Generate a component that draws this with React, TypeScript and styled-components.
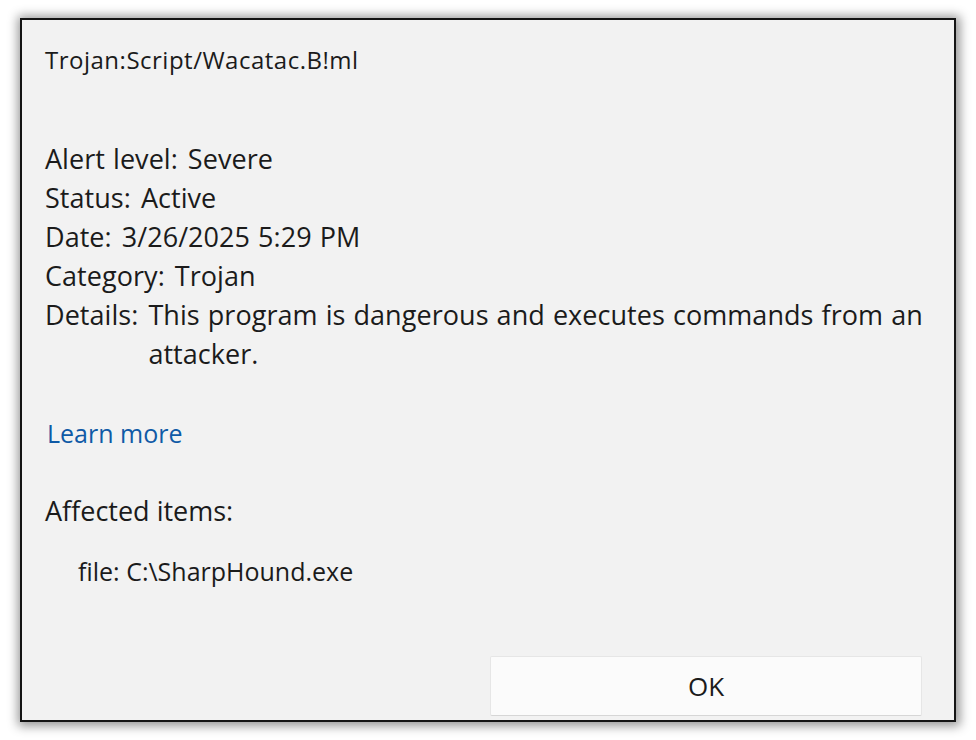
import React from "react";
import styled, { createGlobalStyle } from "styled-components";

const GlobalStyle = createGlobalStyle`
  html, body {
    margin: 0;
    padding: 0;
    background: #ffffff;
  }
  body {
    font-family: "Open Sans", "Noto Sans", sans-serif;
    color: #1b1b1b;
  }
`;

const Page = styled.div`
  width: 976px;
  height: 740px;
  padding: 18px 0 0 20px;
  box-sizing: border-box;
`;

const Dialog = styled.div`
  width: 936px;
  height: 704px;
  box-sizing: border-box;
  border: 2px solid #141414;
  background: #f2f2f2;
  box-shadow: 1px 1px 10px 3px rgba(0, 0, 0, 0.42);
  display: flex;
  flex-direction: column;
  padding: 0 32px 4px 23px;
`;

const Title = styled.div`
  font-size: 24px;
  line-height: 28px;
  margin-top: 26px;
  letter-spacing: 0.5px;
`;

const Facts = styled.div`
  margin-top: 65px;
  margin-right: -20px;
  display: flex;
  flex-direction: column;
`;

const Row = styled.div`
  display: flex;
  gap: 10px;
  font-size: 27px;
  line-height: 39px;
  letter-spacing: 0.05px;
  word-spacing: 1px;
`;

const Label = styled.span`
  flex: none;
`;

const Value = styled.span`
  flex: 1;
  min-width: 0;
`;

const LearnMore = styled.a`
  margin-top: 41px;
  margin-left: 2px;
  font-size: 25px;
  line-height: 39px;
  color: #0f5aa6;
  text-decoration: none;
  align-self: flex-start;
`;

const Section = styled.div`
  margin-top: 38px;
  font-size: 27px;
  line-height: 39px;
`;

const Item = styled.div`
  margin-top: 22px;
  margin-left: 33px;
  font-size: 25px;
  line-height: 39px;
`;

const Footer = styled.div`
  margin-top: auto;
  display: flex;
  justify-content: flex-end;
`;

const Button = styled.button`
  width: 432px;
  height: 60px;
  box-sizing: border-box;
  background: #fbfbfb;
  border: 1px solid #e6e6e6;
  border-bottom-color: #d6d6d6;
  border-radius: 2px;
  font-family: "Open Sans", "Noto Sans", sans-serif;
  font-size: 26px;
  color: #1b1b1b;
  padding: 0;
`;

const facts: [string, string][] = [
  ["Alert level:", "Severe"],
  ["Status:", "Active"],
  ["Date:", "3/26/2025 5:29 PM"],
  ["Category:", "Trojan"],
  ["Details:", "This program is dangerous and executes commands from an attacker."],
];

export default function App() {
  return (
    <>
      <GlobalStyle />
      <Page>
        <Dialog>
          <Title>Trojan:Script/Wacatac.B!ml</Title>
          <Facts>
            {facts.map(([label, value]) => (
              <Row key={label}>
                <Label>{label}</Label>
                <Value>{value}</Value>
              </Row>
            ))}
          </Facts>
          <LearnMore href="#">Learn more</LearnMore>
          <Section>Affected items:</Section>
          <Item>file: C:\SharpHound.exe</Item>
          <Footer>
            <Button>OK</Button>
          </Footer>
        </Dialog>
      </Page>
    </>
  );
}
